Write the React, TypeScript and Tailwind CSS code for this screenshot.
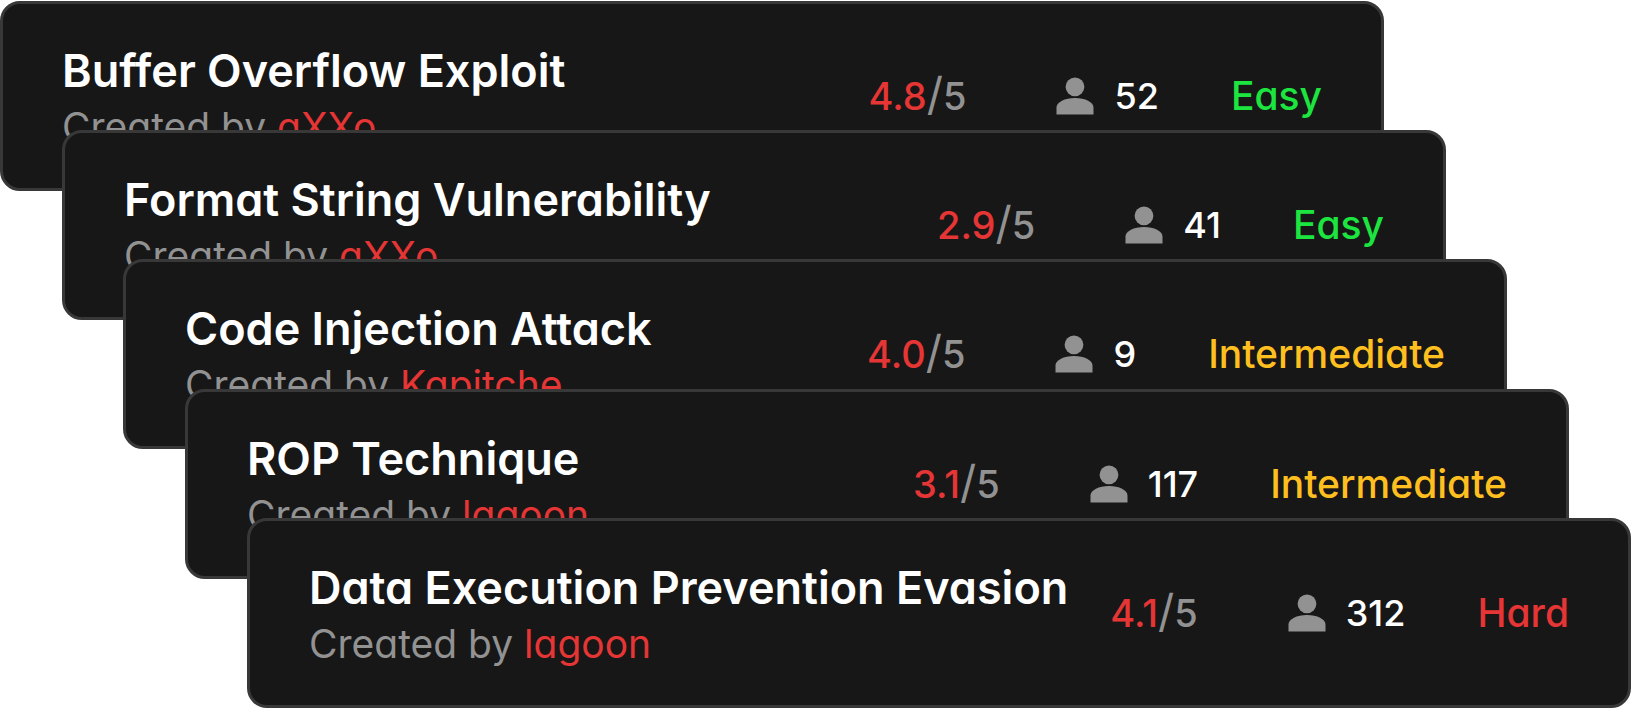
import clsx from "clsx";

type Level = "Easy" | "Intermediate" | "Hard";

interface Challenge {
  title: string;
  author: string;
  rating: string;
  players: number;
  level: Level;
  position: string;
}

const challenges: Challenge[] = [
  { title: "Buffer Overflow Exploit", author: "aXXo", rating: "4.8", players: 52, level: "Easy", position: "mr-[247px]" },
  { title: "Format String Vulnerability", author: "aXXo", rating: "2.9", players: 41, level: "Easy", position: "-mt-[61px] ml-[62px] mr-[185px]" },
  { title: "Code Injection Attack", author: "Kapitche", rating: "4.0", players: 9, level: "Intermediate", position: "-mt-[61px] ml-[123px] mr-[124px]" },
  { title: "ROP Technique", author: "lagoon", rating: "3.1", players: 117, level: "Intermediate", position: "-mt-[60px] ml-[185px] mr-[62px]" },
  { title: "Data Execution Prevention Evasion", author: "lagoon", rating: "4.1", players: 312, level: "Hard", position: "-mt-[61px] ml-[247px]" },
];

const levelColors: Record<Level, string> = {
  Easy: "text-[#1de53f]",
  Intermediate: "text-[#ffbf1f]",
  Hard: "text-[#e53535]",
};

function PersonIcon() {
  return (
    <svg viewBox="0 0 38 38" className="h-[38px] w-[38px] shrink-0 fill-[#929292]" aria-hidden="true">
      <circle cx="19" cy="9.8" r="9.4" />
      <path d="M0.5 37.6V30.4C0.5 25.2 8.8 21 19 21S37.5 25.2 37.5 30.4V37.6Z" />
    </svg>
  );
}

function ChallengeCard({ title, author, rating, players, level, position }: Challenge) {
  return (
    <article
      className={clsx(
        "relative flex items-center justify-between rounded-[20px] border-3 border-[#383838] bg-[#171717] px-[59px] py-[36px] whitespace-nowrap",
        position
      )}
    >
      <div>
        <h2 className="text-[45px] leading-[62px] font-semibold text-white">{title}</h2>
        <p className="text-[39px] leading-[50px] font-normal text-[#929292]">
          Created by <span className="text-[#e53535]">{author}</span>
        </p>
      </div>

      <div className="flex items-center text-[36px] leading-[54px] font-medium">
        <p className="mr-[90px] text-[38px] text-[#929292]">
          <span className="text-[#e53535]">{rating}</span>
          <span className="text-[45px] leading-none font-normal">/</span>5
        </p>
        <PersonIcon />
        <span className="ml-[20px] text-white">{players}</span>
        <span className={clsx("ml-[72px] text-[39px]", levelColors[level])}>{level}</span>
      </div>
    </article>
  );
}

export default function App() {
  return (
    <main className="flex min-h-screen flex-col bg-white pt-px font-['Inter',sans-serif] [font-feature-settings:'cv11']">
      {challenges.map((challenge) => (
        <ChallengeCard key={challenge.title} {...challenge} />
      ))}
    </main>
  );
}
